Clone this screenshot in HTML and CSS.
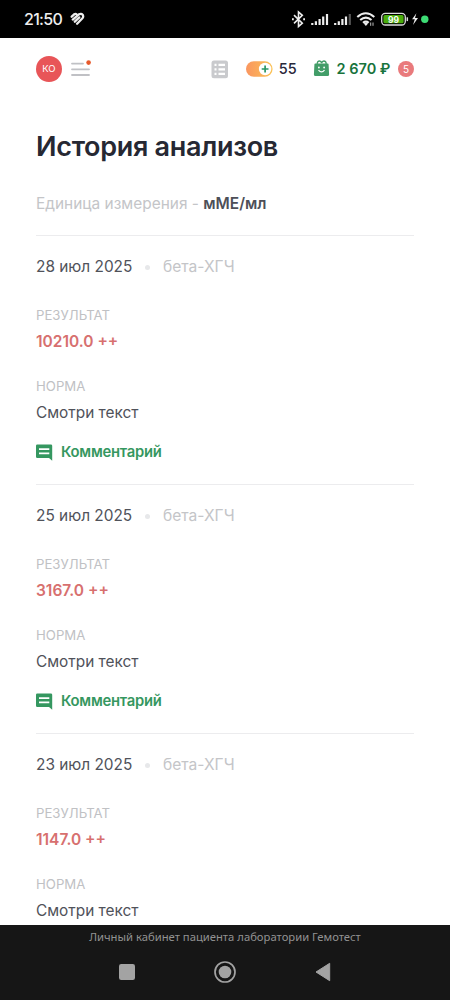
FILE: index.html
```html
<!DOCTYPE html>
<html lang="ru">
<head>
<meta charset="utf-8">
<title>История анализов</title>
<link rel="stylesheet" href="styles.css">
</head>
<body>
<div class="status">
  <span class="clock">21:50</span>
  <svg class="heart" width="15" height="14" viewBox="0 0 15 14" fill="none" stroke="#eee" stroke-width="2.3" stroke-linecap="round" stroke-linejoin="round"><path d="M1.7 4.7 4.2 2.3Q5.6 1.3 6.7 2.5"/><path d="M2.8 7.6 8.6 2.6Q11.5.8 12.9 3.2 13.7 5 12.2 6.5L7.1 11.7"/><path d="M4.8 9.7 9.3 5.4"/></svg>
  <svg class="signals" width="142" height="20" viewBox="291 9 142 20" fill="none">
    <path d="M294 15.2l8.3 8-3.8 3.3V12l3.8 3.3-8.3 8" stroke="#eee" stroke-width="1.6"/>
    <path d="M292 19.2h1.8M303.2 19.2h1.8" stroke="#eee" stroke-width="2"/>
    <g stroke="#eee" stroke-width="2.2"><path d="M312.3 25v-2M315.9 25v-3.7M319.6 25v-6M323.2 25v-8.5M327 25V14"/><path d="M335.2 25v-2M338.8 25v-3.7M342.4 25v-6M346 25v-8.5"/><path d="M349.8 25V14" stroke="#555"/></g>
    <g stroke="#eee" stroke-width="2.1"><path d="M357.3 17q8.5-7.5 17 0M360.2 20q5.7-4.8 11.3 0M363 22.8q2.9-2.4 5.7 0"/></g>
    <path d="M363.7 23.6l2.2 2.5 2.2-2.5q-2.2-1.5-4.4 0" fill="#eee"/><path d="M370.7 22.5v3.3M373 22.5v3.3" stroke="#bbb"/>
    <rect x="381.7" y="13.4" width="23.6" height="11.6" rx="3.5" stroke="#ddd" stroke-width="1.3"/>
    <rect x="383.4" y="15.1" width="20.2" height="8.2" rx="1.6" fill="#4aac0c"/>
    <path d="M407.3 17.3v3.8" stroke="#ddd" stroke-width="1.5"/>
    <text x="393.5" y="22.6" text-anchor="middle" class="charge">99</text>
    <path d="M416.4 13.2l-4.3 6h2.7l-1.8 5.7 5-7h-3z" fill="#eee"/>
    <circle cx="424.8" cy="19.2" r="3.7" fill="#3ddc75"/>
  </svg>
</div>
<main>
  <header class="top">
    <span class="avatar">КО</span>
    <svg class="menu" width="22" height="20" viewBox="0 0 22 20"><path d="M1 6.6h11M1 12.3h17M1 18h17" stroke="#c0c1c5" stroke-width="1.8" stroke-linecap="round"/><circle cx="17.6" cy="5.6" r="2.3" fill="#e75a2b"/></svg>
    <svg class="list" width="18" height="19" viewBox="0 0 18 19"><rect x=".5" y=".5" width="16.5" height="17.8" rx="2.5" fill="#c9cacd"/><path d="M3.5 4.9h2M3.5 9.4h2M3.5 13.9h2M7.5 4.9h6.5M7.5 9.4h6.5M7.5 13.9h6.5" stroke="#fff" stroke-width="2.2"/></svg>
    <svg class="bonus" width="28" height="16" viewBox="0 0 28 16"><defs><linearGradient id="orange"><stop stop-color="#fa9660"/><stop offset="1" stop-color="#fbc354"/></linearGradient></defs><rect x="0" y=".2" width="26.6" height="15.6" rx="7.8" fill="url(#orange)"/><circle cx="19.1" cy="8" r="6.2" fill="#fff"/><path d="M19.1 4.6v6.8M15.7 8h6.8" stroke="#2b9764" stroke-width="1.7"/></svg>
    <span class="points">55</span>
    <svg class="bag" width="17" height="17" viewBox="0 0 17 17"><path d="M4.2 4q0-3 2.4-3 1.7 0 2 2.2Q9.1 1 10.8 1q2.4 0 2.4 3" fill="none" stroke="#429d68" stroke-width="1.3"/><path d="M2.4 3.4h12.2q1 0 1 1l.5 10.1Q16.1 16 14.6 16H2.4Q.9 16 .9 14.5l.5-10.1q0-1 1-1z" fill="#429d68"/><circle cx="5.9" cy="7.5" r=".9" fill="#fff"/><circle cx="11.1" cy="7.5" r=".9" fill="#fff"/><path d="M5.5 10.2q3 3.5 6 0" fill="none" stroke="#fff" stroke-width="1.3"/></svg>
    <span class="sum">2 670 ₽</span>
    <span class="count">5</span>
  </header>
  <h1>История анализов</h1>
  <p class="unit">Единица измерения - <b>мМЕ/мл</b></p>
  <section class="entry">
    <div class="when"><span class="date">28 июл 2025</span><i class="dot"></i><span class="test">бета-ХГЧ</span></div>
    <div class="label">РЕЗУЛЬТАТ</div><div class="result">10210.0 ++</div>
    <div class="label">НОРМА</div><div class="norm">Смотри текст</div>
    <div class="comment"><svg width="17" height="17" viewBox="0 0 17 17"><path d="M1.3.5h13.6q1.3 0 1.3 1.3v15L13 14H1.3Q0 14 0 12.7V1.8Q0 .5 1.3.5z" fill="#359760"/><path d="M3 5.2h10.3M3 9.3h10.3" stroke="#fff" stroke-width="1.8"/></svg><span>Комментарий</span></div>
  </section>
  <section class="entry">
    <div class="when"><span class="date">25 июл 2025</span><i class="dot"></i><span class="test">бета-ХГЧ</span></div>
    <div class="label">РЕЗУЛЬТАТ</div><div class="result">3167.0 ++</div>
    <div class="label">НОРМА</div><div class="norm">Смотри текст</div>
    <div class="comment"><svg width="17" height="17" viewBox="0 0 17 17"><path d="M1.3.5h13.6q1.3 0 1.3 1.3v15L13 14H1.3Q0 14 0 12.7V1.8Q0 .5 1.3.5z" fill="#359760"/><path d="M3 5.2h10.3M3 9.3h10.3" stroke="#fff" stroke-width="1.8"/></svg><span>Комментарий</span></div>
  </section>
  <section class="entry">
    <div class="when"><span class="date">23 июл 2025</span><i class="dot"></i><span class="test">бета-ХГЧ</span></div>
    <div class="label">РЕЗУЛЬТАТ</div><div class="result">1147.0 ++</div>
    <div class="label">НОРМА</div><div class="norm">Смотри текст</div>
  </section>
</main>
<footer>
  <div class="caption">Личный кабинет пациента лаборатории Гемотест</div>
  <nav>
    <svg width="22" height="22" viewBox="0 0 22 22"><rect x="3" y="3" width="16" height="16" rx="2.2" fill="#a3a3a3"/></svg>
    <svg width="22" height="22" viewBox="0 0 22 22"><circle cx="11" cy="11" r="10" fill="none" stroke="#a3a3a3" stroke-width="1.7"/><circle cx="11" cy="11" r="6.3" fill="#a3a3a3"/></svg>
    <svg width="22" height="22" viewBox="0 0 22 22"><path d="M4 11 17.7 2.3v17.4z" fill="#a3a3a3" stroke="#a3a3a3" stroke-linejoin="round"/></svg>
  </nav>
</footer>
</body>
</html>
```
FILE: styles.css
```css
* { box-sizing: border-box; }
body {
  margin: 0;
  height: 1000px;
  display: flex;
  flex-direction: column;
  overflow: hidden;
  background: #fff;
  font-family: Inter, "Liberation Sans", sans-serif;
  color: #50525a;
}
svg { display: block; flex: none; }
.status {
  flex: none;
  height: 38px;
  padding: 0 17px 0 24px;
  display: flex;
  align-items: center;
  background: #000;
  color: #eee;
}
.clock { width: 46px; font-size: 16px; line-height: 20px; font-weight: 500; letter-spacing: -.7px; white-space: nowrap; }
.signals { margin-left: auto; }
.charge { font: 700 8.5px Inter, sans-serif; fill: #fff; }
main { flex: none; height: 887px; padding: 17px 36px 0; overflow: hidden; }
.top { height: 28px; display: flex; align-items: center; white-space: nowrap; }
.avatar {
  width: 26px;
  height: 26px;
  border-radius: 50%;
  background: #e85558;
  color: #fff;
  font-size: 9.5px;
  line-height: 26px;
  text-align: center;
}
.menu { margin: -5px 0 0 9px; }
.list { margin-left: 118px; }
.bonus { margin-left: 17px; }
.points { width: 36px; margin: -1px 0 0 5px; font-size: 14.5px; font-weight: 500; color: #28283a; }
.bag { margin: -1px 0 0 -2px; }
.sum { width: 62px; margin: -1px 0 0 7px; font-size: 14.5px; font-weight: 600; color: #18733c; }
.count {
  width: 16px;
  height: 16px;
  border-radius: 50%;
  background: #e97a7c;
  color: #fff;
  font-size: 10px;
  line-height: 16px;
  text-align: center;
}
h1 {
  margin: 46px 0 0;
  font-size: 27px;
  line-height: 36px;
  font-weight: 600;
  letter-spacing: -.3px;
  color: #262833;
  white-space: nowrap;
}
.unit { margin: 29px 0 21px; font-size: 15.45px; line-height: 20px; color: #c4c5c8; white-space: nowrap; }
.unit b { font-weight: 600; color: #4d4f58; }
.entry { height: 249px; border-top: 1px solid #ececee; padding-top: 21px; line-height: 20px; font-size: 15.4px; }
.when { display: flex; align-items: center; margin-bottom: 30px; white-space: nowrap; }
.date { width: 109px; }
.dot { width: 5px; height: 5px; border-radius: 50%; background: #e7e8ea; }
.test { margin-left: 13px; font-size: 15.6px; color: #c4c5c8; }
.label { font-size: 13.2px; line-height: 16px; margin-bottom: 9px; color: #c0c1c4; }
.result { margin-bottom: 26px; font-size: 15.5px; font-weight: 600; color: #d7706f; }
.comment { display: flex; align-items: center; gap: 8px; margin-top: 19px; font-size: 14.8px; font-weight: 600; letter-spacing: -.25px; color: #359760; }
.comment svg { margin-top: 1px; }
footer { flex: none; height: 75px; background: #161616; color: #929292; }
.caption { padding-top: 3px; font: 11.25px/17px "Noto Sans", sans-serif; text-align: center; }
nav { display: flex; justify-content: center; gap: 76px; margin-top: 16px; }
```
